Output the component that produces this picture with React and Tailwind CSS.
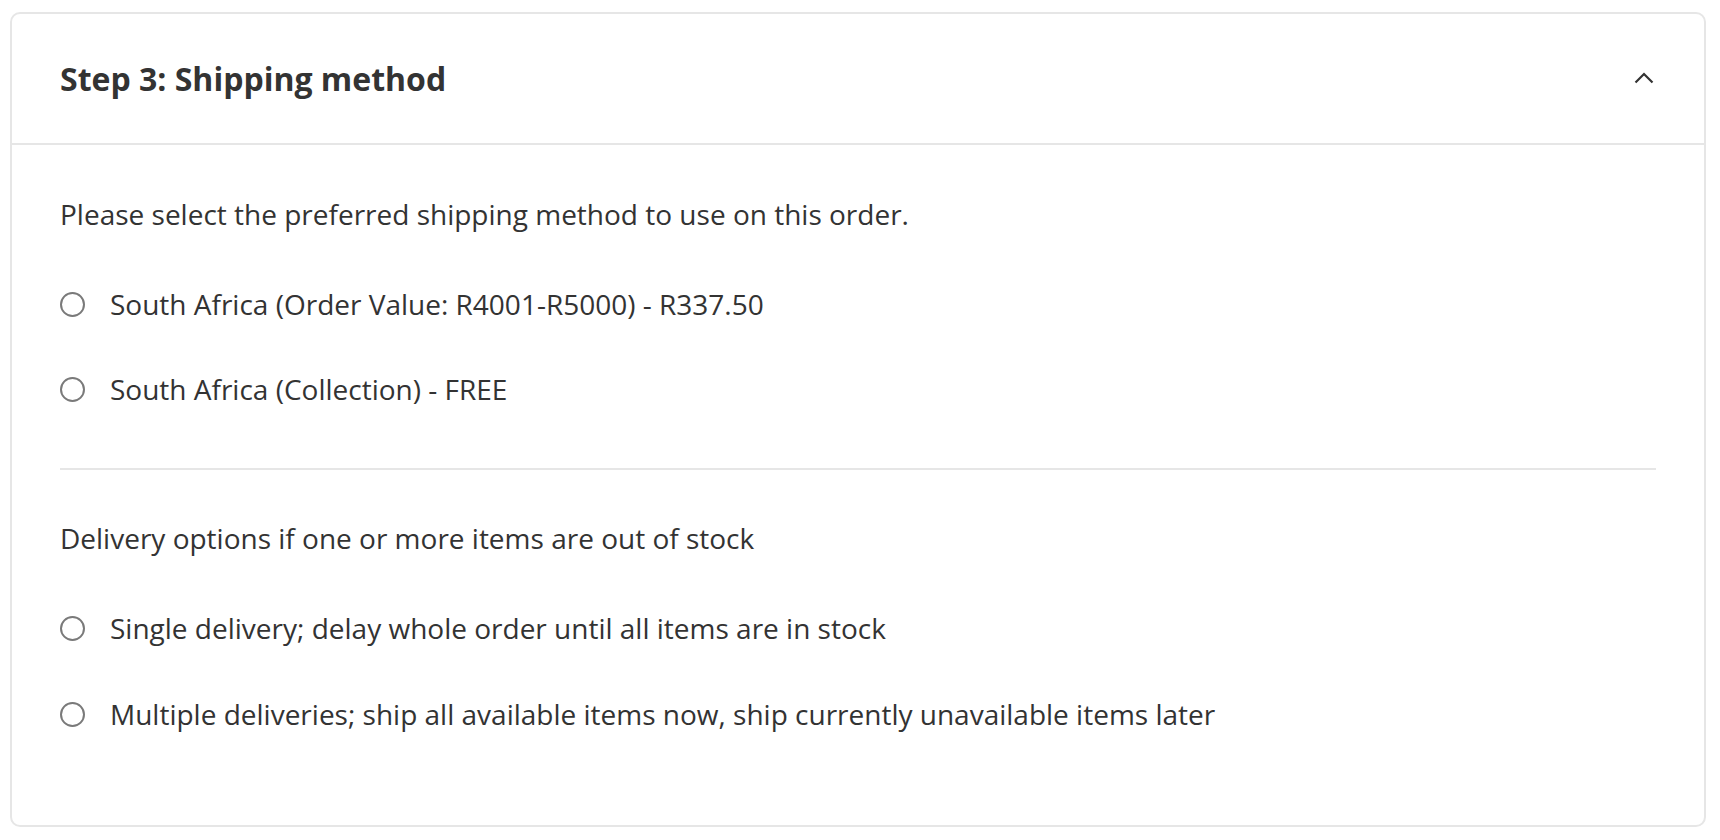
import React from "react";

function Radio({ label }) {
  return (
    <label className="flex items-center h-[40px] cursor-pointer">
      <span className="w-[25px] h-[25px] rounded-full border-2 border-[#7a7a7a] bg-white shrink-0"></span>
      <span className="ml-[25px] text-[28px] leading-[40px] text-[#333333]">{label}</span>
    </label>
  );
}

export default function App() {
  return (
    <div
      className="w-[1720px] h-[840px] bg-white pl-[10px] pr-[14px] pt-[12px]"
      style={{ fontFamily: '"Open Sans", "Noto Sans", sans-serif' }}
    >
      <div className="border-2 border-[#e6e6e6] rounded-[10px] bg-white h-[815px]">
        <div className="flex items-center justify-between h-[131px] pl-[48px] pr-[50px] border-b-2 border-[#e6e6e6]">
          <h2 className="text-[32px] font-bold text-[#333333] leading-[40px]">Step 3: Shipping method</h2>
          <svg width="20" height="12" viewBox="0 0 20 12" fill="none" className="mt-[-2px]">
            <polyline points="1.5,10.5 10,2 18.5,10.5" stroke="#333333" strokeWidth="2.2" />
          </svg>
        </div>
        <div className="pl-[48px] pr-[48px] pt-[49px]">
          <p className="text-[28px] leading-[40px] text-[#333333]">
            Please select the preferred shipping method to use on this order.
          </p>
          <div className="mt-[50px] flex flex-col gap-[45px]">
            <Radio label="South Africa (Order Value: R4001-R5000) - R337.50" />
            <Radio label="South Africa (Collection) - FREE" />
          </div>
          <div className="mt-[59px] h-[2px] bg-[#e6e6e6]"></div>
          <p className="mt-[48px] text-[28px] leading-[40px] text-[#333333]">
            Delivery options if one or more items are out of stock
          </p>
          <div className="mt-[50px] flex flex-col gap-[46px]">
            <Radio label="Single delivery; delay whole order until all items are in stock" />
            <Radio label="Multiple deliveries; ship all available items now, ship currently unavailable items later" />
          </div>
        </div>
      </div>
    </div>
  );
}
